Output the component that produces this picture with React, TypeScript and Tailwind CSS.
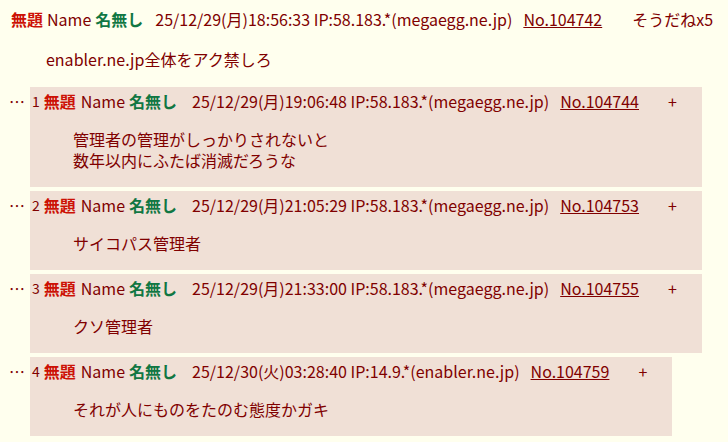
const font = { fontFamily: '"Noto Sans CJK JP", "Noto Sans", sans-serif' };

type Reply = {
  idx: number;
  date: string;
  ip: string;
  no: string;
  body: string[];
};

const replies: Reply[] = [
  {
    idx: 1,
    date: "25/12/29(月)19:06:48",
    ip: "IP:58.183.*(megaegg.ne.jp)",
    no: "No.104744",
    body: ["管理者の管理がしっかりされないと", "数年以内にふたば消滅だろうな"],
  },
  {
    idx: 2,
    date: "25/12/29(月)21:05:29",
    ip: "IP:58.183.*(megaegg.ne.jp)",
    no: "No.104753",
    body: ["サイコパス管理者"],
  },
  {
    idx: 3,
    date: "25/12/29(月)21:33:00",
    ip: "IP:58.183.*(megaegg.ne.jp)",
    no: "No.104755",
    body: ["クソ管理者"],
  },
  {
    idx: 4,
    date: "25/12/30(火)03:28:40",
    ip: "IP:14.9.*(enabler.ne.jp)",
    no: "No.104759",
    body: ["それが人にものをたのむ態度かガキ"],
  },
];

function ReplyRow({ r }: { r: Reply }) {
  return (
    <div className="flex items-start">
      <div className="w-[30px] pl-[9px] pt-[5px] leading-[19px]">…</div>
      <div className="bg-[#f0e0d6] pl-[2px] pr-[25px] pt-[5px] pb-[16px]">
        <div className="flex items-center leading-[19px] whitespace-nowrap">
          <span className="text-[14px]">{r.idx}</span>
          <span className="ml-[4px] font-bold text-[#cc1105]">無題</span>
          <span className="ml-[5px]">Name</span>
          <span className="ml-[4px] font-bold text-[#117743]">名無し</span>
          <span className="ml-[15px]">
            {r.date} {r.ip}
          </span>
          <span className="ml-[11px] underline">{r.no}</span>
          <span className="ml-[29px]">+</span>
        </div>
        <div className="ml-[41px] mt-[18px] leading-[21px]">
          {r.body.map((l) => (
            <div key={l}>{l}</div>
          ))}
        </div>
      </div>
    </div>
  );
}

export default function App() {
  return (
    <div
      className="min-h-[442px] w-full bg-[#ffffee] text-[#800000] text-[16px]"
      style={font}
    >
      <div className="flex items-center pl-[11px] pt-[10px] leading-[19px] whitespace-nowrap">
        <span className="font-bold text-[#cc1105]">無題</span>
        <span className="ml-[4px]">Name</span>
        <span className="ml-[4px] font-bold text-[#117743]">名無し</span>
        <span className="ml-[12px]">25/12/29(月)18:56:33 IP:58.183.*(megaegg.ne.jp)</span>
        <span className="ml-[11px] underline">No.104742</span>
        <span className="ml-[30px]">そうだねx5</span>
      </div>
      <div className="ml-[46px] mt-[21px] leading-[19px]">enabler.ne.jp全体をアク禁しろ</div>
      <div className="mt-[18px] flex flex-col gap-[4px]">
        {replies.map((r) => (
          <ReplyRow key={r.idx} r={r} />
        ))}
      </div>
    </div>
  );
}
